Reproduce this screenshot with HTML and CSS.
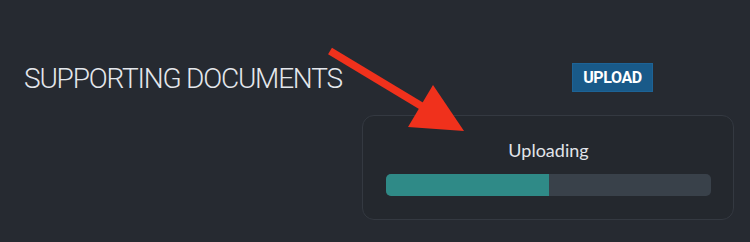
FILE: index.html
```html
<!DOCTYPE html>
<html lang="en">
<head>
    <meta charset="UTF-8">
    <meta name="viewport" content="width=device-width, initial-scale=1.0">
    <title>Supporting Documents</title>
    <link rel="stylesheet" href="styles.css">
</head>
<body>
    <div id="docs">
        <h1 class="title">SUPPORTING DOCUMENTS</h1>

        <div class="side">
            <button type="button" class="upload-btn">UPLOAD</button>

            <div class="panel">
                <p class="status">Uploading</p>
                <div class="bar">
                    <div class="bar-fill" style="width: 50%"></div>
                </div>
            </div>
        </div>
    </div>

    <!-- annotation arrow drawn over the page -->
    <svg class="arrow" viewBox="0 0 750 242" width="750" height="242">
        <line x1="330" y1="51" x2="428" y2="110" stroke="#f0311c" stroke-width="7.5"/>
        <polygon points="433,85 408,127 464,131" fill="#f0311c"/>
    </svg>
</body>
</html>
```

FILE: styles.css
```css
body {
    margin: 0;
    padding: 0;
    height: 242px;
    background-color: #262a31;
    font-family: 'Lato', sans-serif;
    position: relative;
    overflow: hidden;
}

#docs {
    display: flex;
    align-items: flex-start;
    justify-content: space-between;
    padding: 0 16px 0 24px;
}

.title {
    flex: 1 1 auto;
    min-width: 0;
    margin: 65px 0 0 0;
    font-family: 'Roboto', sans-serif;
    font-size: 28px;
    font-weight: 300;
    line-height: 1;
    letter-spacing: -1.2px;
    color: #e4e7ec;
    white-space: nowrap;
}

.side {
    flex: 0 0 372px;
    padding-top: 63px;
}

.upload-btn {
    display: block;
    margin-left: 210px;
    width: 81px;
    height: 29px;
    padding: 0;
    background-color: #195a89;
    border: 1px solid #1d6396;
    color: #fff;
    font-family: 'Roboto', sans-serif;
    font-weight: 700;
    font-size: 16px;
    letter-spacing: -0.4px;
    cursor: pointer;
}

.panel {
    margin-top: 23px;
    height: 105px;
    box-sizing: border-box;
    border: 1px solid #343941;
    border-radius: 12px;
    background-color: #24282e;
    padding: 22px 22px 0 23px;
}

.status {
    margin: 0 0 12px 0;
    text-align: center;
    font-size: 18px;
    line-height: 24px;
    color: #e1e4e9;
}

.bar {
    height: 22px;
    border-radius: 5px;
    background-color: #39414a;
    overflow: hidden;
}

.bar-fill {
    height: 100%;
    background-color: #2f8a87;
}

.arrow {
    position: absolute;
    left: 0;
    top: 0;
    pointer-events: none;
}
```
